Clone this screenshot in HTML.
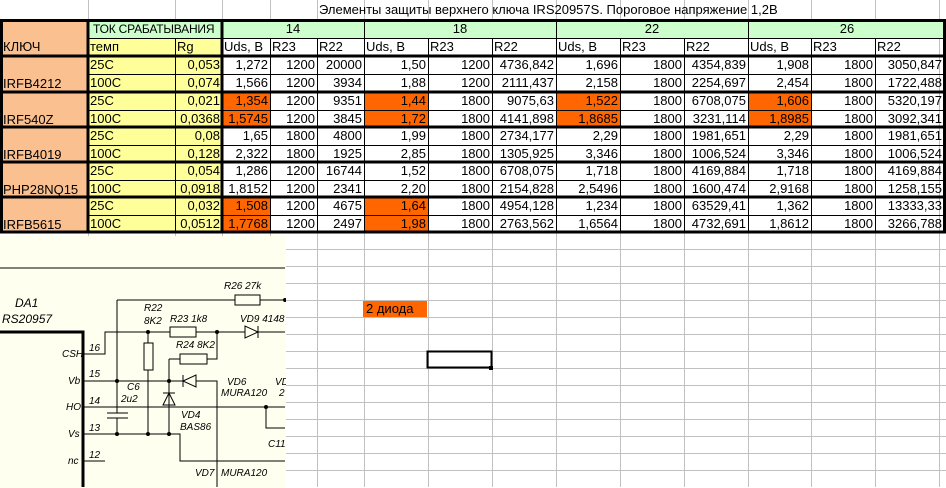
<!DOCTYPE html>
<html><head><meta charset="utf-8"><style>
body{margin:0;width:946px;height:487px;overflow:hidden;background:#fff;position:relative;font-family:"Liberation Sans",Arial,sans-serif;font-size:13px;color:#000}
.c{position:absolute;box-sizing:border-box;white-space:nowrap;overflow:hidden;line-height:18px;padding:0 2px}
.r{text-align:right}.ctr{text-align:center}
</style></head><body>
<svg width="946" height="487" style="position:absolute;left:0;top:0">
<g stroke="#c0c0c0" stroke-width="1">
<path d="M88.5 0V487M175.5 0V487M222.5 0V487M270.5 0V487M317.5 0V487M364.5 0V487M428.5 0V487M492.5 0V487M556.5 0V487M620.5 0V487M684.5 0V487M748.5 0V487M811.5 0V487M875.5 0V487M939.5 0V487"/>
<path d="M0 19.5H946M0 249.5H946M0 266.5H946M0 283.5H946M0 300.5H946M0 317.5H946M0 334.5H946M0 351.5H946M0 368.5H946M0 385.5H946M0 402.5H946M0 419.5H946M0 436.5H946M0 453.5H946M0 470.5H946"/>
</g>
</svg>
<div class="c" style="left:0;top:20px;width:88px;height:212px;background:#fac090"></div>
<div class="c" style="left:88px;top:20px;width:134px;height:18px;background:#ccffcc"></div>
<div class="c" style="left:222px;top:20px;width:724px;height:18px;background:#ccffcc"></div>
<div class="c" style="left:88px;top:38px;width:134px;height:194px;background:#ffff99"></div>
<svg width="946" height="487" style="position:absolute;left:0;top:0">
<g fill="#ff6600">
<rect x="223" y="92" width="47" height="35"/><rect x="365" y="92" width="63" height="35"/><rect x="557" y="92" width="63" height="35"/><rect x="749" y="92" width="62" height="35"/>
<rect x="223" y="197" width="47" height="35"/><rect x="365" y="197" width="63" height="35"/>
<rect x="363" y="301" width="64" height="16"/>
</g>
<g stroke="#000" stroke-width="1" fill="none">
<path d="M88.5 20V232M175.5 38V232M222.5 20V232M270.5 38V232M317.5 38V232M364.5 20V232M428.5 38V232M492.5 38V232M556.5 20V232M620.5 38V232M684.5 38V232M748.5 20V232M811.5 38V232M875.5 38V232"/>
<path d="M88 38.5H946M88 74.5H946M88 110.5H946M88 145.5H946M88 180.5H946M88 215.5H946"/>
</g>
<g stroke="#000" stroke-width="3" fill="none">
<path d="M0 20.5H946M0 56H946M0 92H946M0 127H946M0 162H946M0 197H946M0 232H946M1.5 20V232M88 20V232M944.5 20V232M222 20V232"/>
</g>
<rect x="427.5" y="351.5" width="64" height="16" fill="none" stroke="#000" stroke-width="2"/>
<rect x="489" y="366" width="4" height="4" fill="#000"/>
</svg>
<div class="c" style="left:317px;top:1px">Элементы защиты верхнего ключа IRS20957S. Пороговое напряжение 1,2В</div>
<div class="c" style="left:1px;top:38px">КЛЮЧ</div>
<div class="c" style="left:91px;top:20px;font-size:12px;letter-spacing:-0.2px">ТОК СРАБАТЫВАНИЯ</div>
<div class="c ctr" style="left:222px;top:20px;width:142px">14</div>
<div class="c ctr" style="left:364px;top:20px;width:192px">18</div>
<div class="c ctr" style="left:556px;top:20px;width:192px">22</div>
<div class="c ctr" style="left:748px;top:20px;width:198px">26</div>
<div class="c" style="left:88px;top:38px">темп</div><div class="c" style="left:175px;top:38px">Rg</div>
<div class="c" style="left:222px;top:38px">Uds, В</div><div class="c" style="left:270px;top:38px">R23</div><div class="c" style="left:317px;top:38px">R22</div>
<div class="c" style="left:364px;top:38px">Uds, В</div><div class="c" style="left:428px;top:38px">R23</div><div class="c" style="left:492px;top:38px">R22</div>
<div class="c" style="left:556px;top:38px">Uds, В</div><div class="c" style="left:620px;top:38px">R23</div><div class="c" style="left:684px;top:38px">R22</div>
<div class="c" style="left:748px;top:38px">Uds, В</div><div class="c" style="left:811px;top:38px">R23</div><div class="c" style="left:875px;top:38px">R22</div>
<div id="d"></div>
<script>
var rows=[
["IRFB4212","25C","0,053","1,272","1200","20000","1,50","1200","4736,842","1,696","1800","4354,839","1,908","1800","3050,847"],
["","100C","0,074","1,566","1200","3934","1,88","1200","2111,437","2,158","1800","2254,697","2,454","1800","1722,488"],
["IRF540Z","25C","0,021","1,354","1200","9351","1,44","1800","9075,63","1,522","1800","6708,075","1,606","1800","5320,197"],
["","100C","0,0368","1,5745","1200","3845","1,72","1800","4141,898","1,8685","1800","3231,114","1,8985","1800","3092,341"],
["IRFB4019","25C","0,08","1,65","1800","4800","1,99","1800","2734,177","2,29","1800","1981,651","2,29","1800","1981,651"],
["","100C","0,128","2,322","1800","1925","2,85","1800","1305,925","3,346","1800","1006,524","3,346","1800","1006,524"],
["PHP28NQ15","25C","0,054","1,286","1200","16744","1,52","1800","6708,075","1,718","1800","4169,884","1,718","1800","4169,884"],
["","100C","0,0918","1,8152","1200","2341","2,20","1800","2154,828","2,5496","1800","1600,474","2,9168","1800","1258,155"],
["IRFB5615","25C","0,032","1,508","1200","4675","1,64","1800","4954,128","1,234","1800","63529,41","1,362","1800","13333,33"],
["","100C","0,0512","1,7768","1200","2497","1,98","1800","2763,562","1,6564","1800","4732,691","1,8612","1800","3266,788"]];
var xs=[175,222,270,317,364,428,492,556,620,684,748,811,875,944];
var tops=[56,74,92,110,127,145,162,180,197,215];
var h="";
rows.forEach(function(r,i){var t=tops[i];
 if(i%2==0)h+='<div class="c" style="left:1px;top:'+(tops[i+1]+1)+'px">'+r[0]+'</div>';
 h+='<div class="c" style="left:88px;top:'+t+'px">'+r[1]+'</div>';
 for(var k=2;k<15;k++){h+='<div class="c r" style="left:'+xs[k-2]+'px;top:'+t+'px;width:'+(xs[k-1]-xs[k-2])+'px">'+r[k]+'</div>';}
});
document.getElementById("d").innerHTML=h;
</script>
<div class="c" style="left:364px;top:300px">2 диода</div>
<svg width="286" height="252" viewBox="0 236 286 252" style="position:absolute;left:0;top:236px;background:#fffff0">
<g stroke="#000" fill="none" stroke-width="1">
<path d="M0 268H285"/>
<path d="M117 300H235M260 300H285"/><rect x="235" y="295" width="25" height="10"/>
<path d="M83 354H105V332H170M196 332H245M258 332H285"/><rect x="170" y="327" width="26" height="10"/>
<path d="M245 326V338L258 332Z M258 326V338"/>
<path d="M117 300V413M117 418V434"/><path d="M107 413H128M107 418H128"/>
<path d="M148 332V343M148 370V434"/><rect x="144" y="343" width="9" height="27"/>
<path d="M169 359H180M207 359H217V332M169 359V434"/><rect x="180" y="354" width="27" height="10"/>
<path d="M83 381H183M196 381H217V487"/><path d="M196 375V387L183 381Z M183 375V387"/>
<path d="M169 393L163 405H175Z M163 393H175"/>
<path d="M83 407H285M266 407V428H285"/>
<path d="M83 434H180V461H285"/>
<path d="M83 461H105"/>
</g>
<path d="M0 332H83V487" stroke="#000" stroke-width="3" fill="none"/>
<g fill="#000"><circle cx="117" cy="381" r="2"/><circle cx="117" cy="434" r="2"/><circle cx="148" cy="332" r="2"/><circle cx="148" cy="434" r="2"/><circle cx="217" cy="332" r="2"/><circle cx="169" cy="381" r="2"/><circle cx="169" cy="434" r="2"/><circle cx="266" cy="407" r="2"/><circle cx="285" cy="300" r="2"/></g>
<g font-family="Liberation Sans,Arial,sans-serif" font-style="italic" font-size="10" fill="#000">
<text x="15" y="307" font-size="12">DA1</text><text x="2" y="323" font-size="12">RS20957</text>
<text x="224" y="289">R26 27k</text><text x="144" y="311">R22</text><text x="144" y="324">8K2</text>
<text x="170" y="322">R23 1k8</text><text x="240" y="322">VD9 4148</text><text x="176" y="348">R24 8K2</text>
<text x="62" y="357">CSH</text><text x="89" y="351">16</text>
<text x="68" y="384">Vb</text><text x="89" y="377">15</text>
<text x="66" y="410">HO</text><text x="89" y="404">14</text>
<text x="68" y="437">Vs</text><text x="89" y="431">13</text>
<text x="68" y="464">nc</text><text x="89" y="458">12</text>
<text x="127" y="390">C6</text><text x="121" y="402">2u2</text>
<text x="227" y="385">VD6</text><text x="221" y="396">MURA120</text>
<text x="181" y="418">VD4</text><text x="180" y="430">BAS86</text>
<text x="268" y="447">C11</text><text x="275" y="385">VD</text><text x="279" y="396">2</text>
<text x="195" y="476">VD7</text><text x="221" y="476">MURA120</text>
</g>
</svg>
</body></html>
